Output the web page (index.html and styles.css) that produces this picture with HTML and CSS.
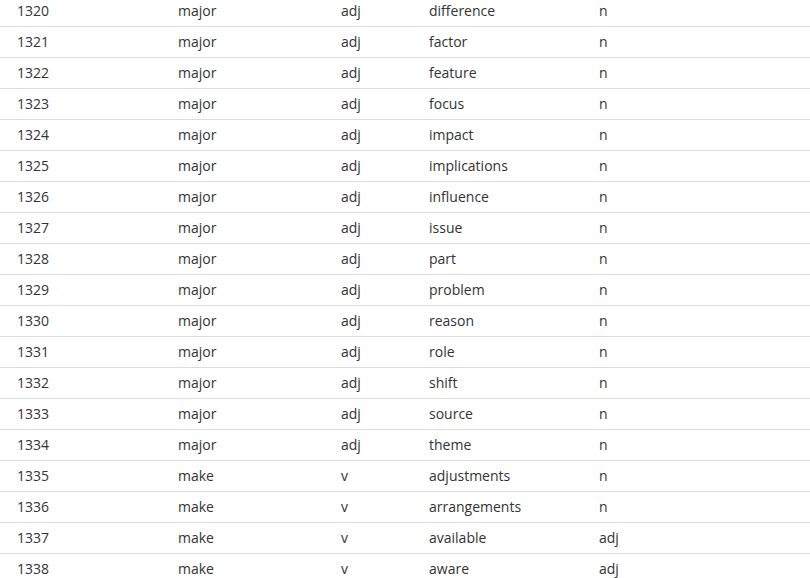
FILE: index.html
```html
<!DOCTYPE html>
<html>
<head>
<meta charset="utf-8">
<link rel="stylesheet" href="styles.css">
</head>
<body>
<table class="words">
<colgroup><col class="c1"><col class="c2"><col class="c3"><col class="c4"><col class="c5"></colgroup>
<tbody>
<tr><td>1320</td><td>major</td><td>adj</td><td>difference</td><td>n</td></tr>
<tr><td>1321</td><td>major</td><td>adj</td><td>factor</td><td>n</td></tr>
<tr><td>1322</td><td>major</td><td>adj</td><td>feature</td><td>n</td></tr>
<tr><td>1323</td><td>major</td><td>adj</td><td>focus</td><td>n</td></tr>
<tr><td>1324</td><td>major</td><td>adj</td><td>impact</td><td>n</td></tr>
<tr><td>1325</td><td>major</td><td>adj</td><td>implications</td><td>n</td></tr>
<tr><td>1326</td><td>major</td><td>adj</td><td>influence</td><td>n</td></tr>
<tr><td>1327</td><td>major</td><td>adj</td><td>issue</td><td>n</td></tr>
<tr><td>1328</td><td>major</td><td>adj</td><td>part</td><td>n</td></tr>
<tr><td>1329</td><td>major</td><td>adj</td><td>problem</td><td>n</td></tr>
<tr><td>1330</td><td>major</td><td>adj</td><td>reason</td><td>n</td></tr>
<tr><td>1331</td><td>major</td><td>adj</td><td>role</td><td>n</td></tr>
<tr><td>1332</td><td>major</td><td>adj</td><td>shift</td><td>n</td></tr>
<tr><td>1333</td><td>major</td><td>adj</td><td>source</td><td>n</td></tr>
<tr><td>1334</td><td>major</td><td>adj</td><td>theme</td><td>n</td></tr>
<tr><td>1335</td><td>make</td><td>v</td><td>adjustments</td><td>n</td></tr>
<tr><td>1336</td><td>make</td><td>v</td><td>arrangements</td><td>n</td></tr>
<tr><td>1337</td><td>make</td><td>v</td><td>available</td><td>adj</td></tr>
<tr><td>1338</td><td>make</td><td>v</td><td>aware</td><td>adj</td></tr>
</tbody>
</table>
</body>
</html>
```
FILE: styles.css
```css
html, body {
  margin: 0;
  padding: 0;
  background: #fff;
  overflow: hidden;
}
.words {
  width: 810px;
  margin-top: -4px;
  border-collapse: collapse;
  table-layout: fixed;
  font-family: "Open Sans", "Noto Sans", sans-serif;
  font-size: 14px;
  color: #333;
}
.c1 { width: 161px; }
.c2 { width: 163px; }
.c3 { width: 88px; }
.c4 { width: 170px; }
.words td {
  height: 30px;
  padding: 0 0 0 17px;
  border-bottom: 1px solid #ddd;
  white-space: nowrap;
  vertical-align: middle;
  line-height: 20px;
}
```
